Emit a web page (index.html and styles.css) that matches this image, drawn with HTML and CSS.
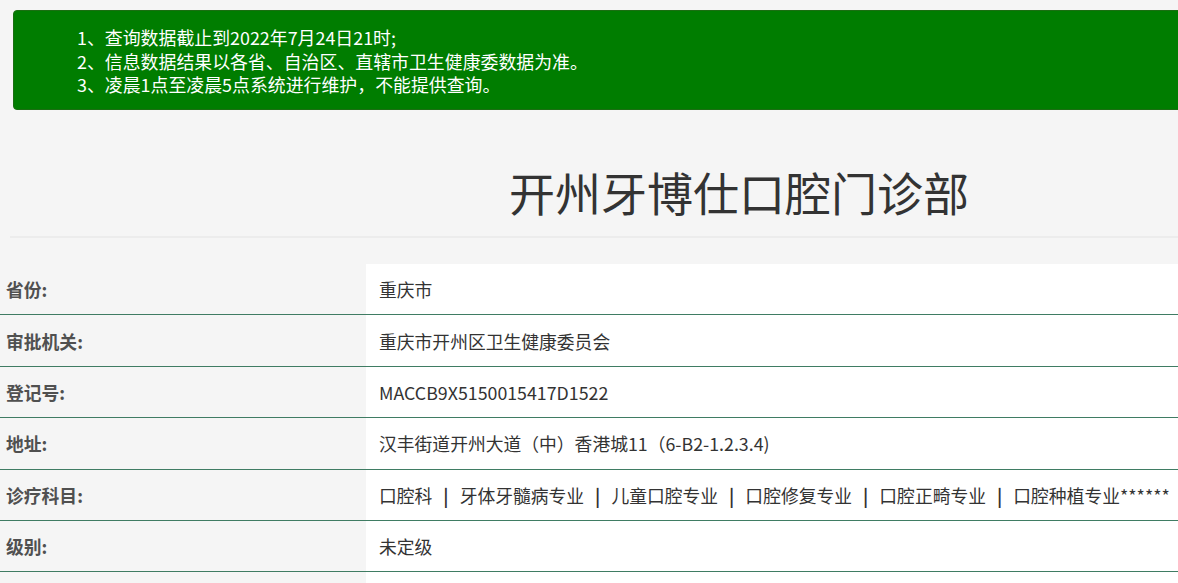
FILE: index.html
```html
<!DOCTYPE html>
<html lang="zh-CN">
<head>
<meta charset="utf-8">
<title>开州牙博仕口腔门诊部</title>
<link rel="stylesheet" href="styles.css">
</head>
<body>
<div class="page">
  <div class="notice">
    <ol class="notice-list">
      <li>1、查询数据截止到2022年7月24日21时;</li>
      <li>2、信息数据结果以各省、自治区、直辖市卫生健康委数据为准。</li>
      <li>3、凌晨1点至凌晨5点系统进行维护，不能提供查询。</li>
    </ol>
  </div>
  <h1 class="title">开州牙博仕口腔门诊部</h1>
  <div class="divider"></div>
  <table class="info">
    <tr><th>省份:</th><td>重庆市</td></tr>
    <tr><th>审批机关:</th><td>重庆市开州区卫生健康委员会</td></tr>
    <tr><th>登记号:</th><td>MACCB9X5150015417D1522</td></tr>
    <tr><th>地址:</th><td>汉丰街道开州大道（中）香港城11（6-B2-1.2.3.4)</td></tr>
    <tr><th>诊疗科目:</th><td>口腔科<span class="sep">|</span>牙体牙髓病专业<span class="sep">|</span>儿童口腔专业<span class="sep">|</span>口腔修复专业<span class="sep">|</span>口腔正畸专业<span class="sep">|</span>口腔种植专业******</td></tr>
    <tr><th>级别:</th><td>未定级</td></tr>
    <tr><th>&nbsp;</th><td>&nbsp;</td></tr>
  </table>
</div>
</body>
</html>
```

FILE: styles.css
```css
html, body {
  margin: 0;
  padding: 0;
  background: #f5f5f5;
  overflow-x: hidden;
}
body {
  font-family: "Noto Sans CJK SC", "Noto Sans", "Liberation Sans", sans-serif;
  color: #333;
  font-size: 17.8px;
}
.page {
  width: 1478px;
}
.notice {
  margin: 10px 0 0 13px;
  height: 100px;
  box-sizing: border-box;
  background: #007d00;
  border: 1px solid #1b6e12;
  border-radius: 4px;
  padding: 15px 0 0 63px;
  color: #fff;
}
.notice-list {
  list-style: none;
  margin: 0;
  padding: 0;
}
.notice-list li {
  line-height: 23.5px;
  font-size: 17.9px;
}
.title {
  margin: 51px 0 0 0;
  font-size: 46px;
  font-weight: 400;
  line-height: 60px;
  text-align: center;
  color: #333;
}
.divider {
  margin: 15px 0 0 10px;
  height: 2px;
  background: #ececec;
}
.info {
  margin-top: 26px;
  width: 100%;
  border-collapse: collapse;
}
.info th, .info td {
  height: 50.4px;
  padding: 0;
  border-bottom: 1px solid #3f7c63;
  text-align: left;
  vertical-align: middle;
}
.info th {
  width: 366px;
  padding-left: 6px;
  box-sizing: border-box;
  font-weight: 700;
  color: #505050;
  background: #f5f5f5;
}
.info td {
  padding-left: 13px;
  background: #fff;
  color: #333;
  white-space: nowrap;
}
.sep {
  margin: 0 11px;
  font-weight: 700;
  color: #333;
}
```
